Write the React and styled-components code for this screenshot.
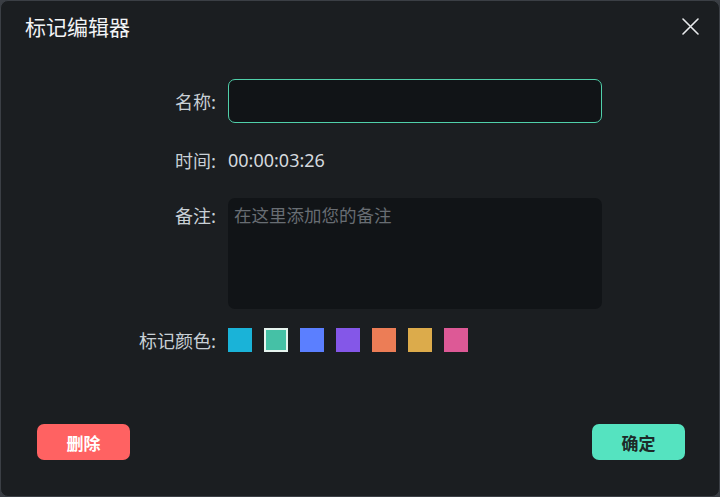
import React, { useState } from 'react'
import styled, { createGlobalStyle } from 'styled-components'

const GlobalStyle = createGlobalStyle`
  html, body {
    margin: 0;
    padding: 0;
    background: #3a3e44;
  }
  * { box-sizing: border-box; }
`

const COLORS = ['#1ab3d8', '#45c1a6', '#5b7fff', '#8457e8', '#ec7d56', '#dcab4b', '#dd5996']

const Dialog = styled.div`
  width: 720px;
  height: 497px;
  background: #1b1e21;
  border: 1px solid #3b3f45;
  border-radius: 8px;
  display: flex;
  flex-direction: column;
  font-family: "Noto Sans CJK SC", "Liberation Sans", sans-serif;
  color: #d4d9de;
`

const Header = styled.div`
  height: 50px;
  display: flex;
  align-items: flex-start;
  justify-content: space-between;
  padding: 13px 19px 0 24px;
`

const Title = styled.h1`
  margin: 0;
  font-size: 21px;
  line-height: 24px;
  font-weight: 400;
  color: #f2f4f6;
`

const CloseBtn = styled.button`
  background: none;
  border: none;
  padding: 0;
  margin-top: 2px;
  width: 20px;
  height: 20px;
  display: flex;
  align-items: center;
  justify-content: center;
  cursor: pointer;
`

const Form = styled.div`
  flex: 1;
  display: grid;
  grid-template-columns: 215px 374px;
  column-gap: 12px;
  align-content: start;
  padding-top: 28px;
`

const Label = styled.div`
  text-align: right;
  font-size: 18px;
  line-height: 24px;
  color: #c9d0d6;
  align-self: ${p => p.top ? 'start' : 'center'};
  padding-top: ${p => p.top ? '5px' : '0'};
  margin-bottom: ${p => p.gap || 0}px;
`

const Field = styled.div`
  margin-bottom: ${p => p.gap || 0}px;
  display: flex;
  align-items: center;
`

const NameInput = styled.input`
  width: 374px;
  height: 44px;
  background: #111417;
  border: 1px solid #50d0aa;
  border-radius: 7px;
  outline: none;
  color: #e6e9ec;
  font-size: 17px;
  padding: 0 10px;
`

const Value = styled.span`
  font-size: 18px;
  line-height: 24px;
  color: #d4d9de;
  font-family: "Noto Sans", "Noto Sans CJK SC", sans-serif;
`

const Notes = styled.textarea`
  width: 374px;
  height: 111px;
  background: #111417;
  border: none;
  border-radius: 7px;
  resize: none;
  outline: none;
  padding: 5px 6px;
  font-family: "Noto Sans CJK SC", sans-serif;
  font-size: 17.5px;
  line-height: 24px;
  color: #e6e9ec;
  &::placeholder { color: #686d73; }
`

const Swatches = styled.div`
  display: flex;
  gap: 12px;
`

const Swatch = styled.div`
  width: 24px;
  height: 24px;
  background: ${p => p.color};
  border: ${p => p.active ? '2px solid #e6f4ef' : 'none'};
  box-shadow: ${p => p.active ? `inset 0 0 0 1px ${p.color}` : 'none'};
  cursor: pointer;
`

const Footer = styled.div`
  display: flex;
  justify-content: space-between;
  padding: 0 34px 36px 36px;
`

const Button = styled.button`
  width: 93px;
  height: 36px;
  border: none;
  border-radius: 7px;
  background: ${p => p.bg};
  color: ${p => p.fg};
  font-family: "Noto Sans CJK SC", sans-serif;
  font-size: 17px;
  font-weight: 700;
  cursor: pointer;
`

function CloseIcon() {
  return (
    <svg width="17" height="17" viewBox="0 0 17 17">
      <path d="M1 1 L16 16 M16 1 L1 16" stroke="#e8eaec" strokeWidth="1.6" strokeLinecap="round" />
    </svg>
  )
}

export default function App() {
  const [active, setActive] = useState(1)
  return (
    <>
      <GlobalStyle />
      <Dialog>
        <Header>
          <Title>标记编辑器</Title>
          <CloseBtn><CloseIcon /></CloseBtn>
        </Header>
        <Form>
          <Label gap={25}>名称:</Label>
          <Field gap={25}><NameInput /></Field>

          <Label gap={26}>时间:</Label>
          <Field gap={26}><Value>00:00:03:26</Value></Field>

          <Label top gap={19}>备注:</Label>
          <Field gap={19}><Notes placeholder="在这里添加您的备注" /></Field>

          <Label>标记颜色:</Label>
          <Field>
            <Swatches>
              {COLORS.map((c, i) => (
                <Swatch key={c} color={c} active={i === active} onClick={() => setActive(i)} />
              ))}
            </Swatches>
          </Field>
        </Form>
        <Footer>
          <Button bg="#ff6262" fg="#ffffff">删除</Button>
          <Button bg="#55e3c0" fg="#1d2a28">确定</Button>
        </Footer>
      </Dialog>
    </>
  )
}
